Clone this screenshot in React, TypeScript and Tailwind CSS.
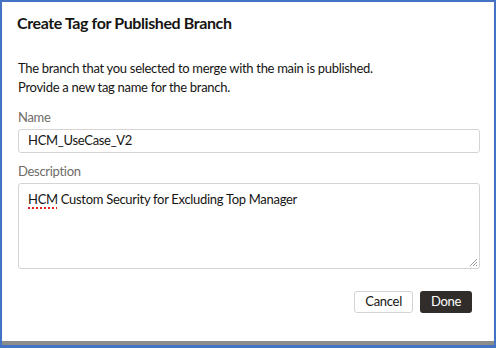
import React from "react";

const App = () => {
  return (
    <div
      className="w-[496px] h-[348px] bg-white border-[#4472c4] border-l-2 border-t-2 border-r-2 border-b-[3px] overflow-hidden"
      style={{ fontFamily: 'Lato, "Noto Sans", sans-serif' }}
    >
      <div className="h-full flex flex-col border-b-4 border-[#8c8c8c] text-[#161513]">
        <h1 className="pl-[15px] pt-[10px] text-[16px] font-bold leading-[22px] tracking-[-0.4px]">
          Create Tag for Published Branch
        </h1>

        <div className="pl-4 pr-[14px] mt-[25px] tracking-[-0.3px]">
          <p className="text-[13px] leading-[19px]">
            The branch that you selected to merge with the main is published.
            <br />
            Provide a new tag name for the branch.
          </p>

          <div className="mt-[11px] text-[13px] text-[#6f6c69] leading-[18px]">Name</div>
          <div className="mt-[3px] h-[24px] border border-[#d6d4d2] rounded-[3px] flex items-center pl-[9px] text-[13px]">
            HCM_UseCase_V2
          </div>

          <div className="mt-[9px] text-[13px] text-[#6f6c69] leading-[18px]">Description</div>
          <div className="relative mt-[3px] h-[86px] border border-[#d6d4d2] rounded-[3px] pl-[9px] pt-[6px] text-[13px] leading-[18px]">
            <span className="underline decoration-dotted decoration-[#e0261b] decoration-2 underline-offset-[3px]">
              HCM
            </span>{" "}
            Custom Security for Excluding Top Manager
            <svg
              className="absolute right-[1px] bottom-[1px]"
              width="9"
              height="9"
              viewBox="0 0 9 9"
            >
              <path d="M8 1 L1 8 M8 4 L4 8 M8 7 L7 8" stroke="#9a9a9a" strokeWidth="1" />
            </svg>
          </div>

          <div className="mt-[22px] flex justify-end gap-[7px] pr-[8px]">
            <button className="h-[22px] px-[10px] border border-[#d6d4d2] rounded-[3px] bg-white text-[13px] text-[#161513]">
              Cancel
            </button>
            <button className="h-[22px] px-[11px] rounded-[3px] bg-[#312d2a] text-[13px] text-white">
              Done
            </button>
          </div>
        </div>
      </div>
    </div>
  );
};

export default App;
